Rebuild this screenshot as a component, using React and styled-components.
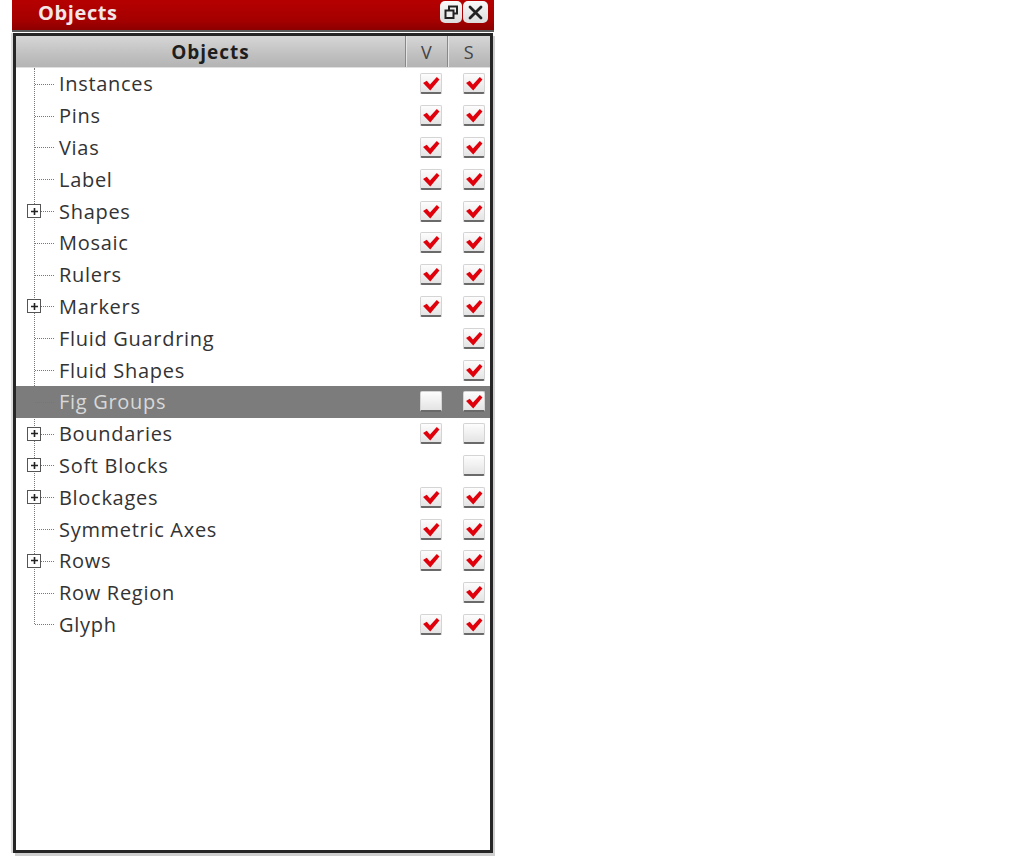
import React from 'react';
import styled, { createGlobalStyle } from 'styled-components';

const Global = createGlobalStyle`
  html, body { margin: 0; background: #fff; }
  body { font-family: "Open Sans", "DejaVu Sans", sans-serif; }
`;

const Page = styled.div`
  width: 1013px;
  height: 858px;
  background: #fff;
  overflow: hidden;
`;

const Window = styled.div`
  margin-left: 12px;
  width: 482px;
  display: flex;
  flex-direction: column;
`;

const TitleBar = styled.div`
  height: 30px;
  background: linear-gradient(#b60000, #a40000 70%, #8c0000);
  display: flex;
  align-items: center;
  padding-left: 26px;
  padding-right: 6px;
  border-bottom: 2px solid #5a5a5a;
`;

const Title = styled.div`
  flex: 1;
  color: #f3e6e6;
  font-weight: 700;
  font-size: 20px;
  letter-spacing: 0.6px;
  margin-top: -6px;
`;

const WinButton = styled.div`
  width: ${p => p.$w}px;
  height: 22px;
  margin-left: 1px;
  margin-top: -6px;
  border-radius: 5px;
  background: linear-gradient(#fafafa, #dcdcdc);
  display: flex;
  align-items: center;
  justify-content: center;
`;

const Frame = styled.div`
  margin-top: 1px;
  margin-left: 1px;
  width: 474px;
  height: 814px;
  border: 3px solid #262626;
  box-shadow: -2px 0 0 #ddd, 2px 3px 0 #cfcfcf;
  background: #fff;
  display: flex;
  flex-direction: column;
`;

const Header = styled.div`
  height: 31px;
  display: grid;
  grid-template-columns: 389px 42px 43px;
  background: linear-gradient(#d6d6d6, #c0c0c0 60%, #b4b4b4);
  border-bottom: 1px solid #e0e0e0;
`;

const HeadCell = styled.div`
  display: flex;
  align-items: center;
  justify-content: center;
  font-size: ${p => (p.$bold ? 19 : 18)}px;
  letter-spacing: ${p => (p.$bold ? 1 : 0.5)}px;
  font-weight: ${p => (p.$bold ? 700 : 400)};
  color: ${p => (p.$bold ? '#1e1e1e' : '#444')};
  border-left: ${p => (p.$divider ? '1px solid #888' : 'none')};
  box-shadow: ${p => (p.$divider ? 'inset 1px 0 0 #e4e4e4' : 'none')};
`;

const Tree = styled.div`
  position: relative;
  display: flex;
  flex-direction: column;
`;

const VLine = styled.div`
  position: absolute;
  left: 18px;
  top: 0;
  height: 556px;
  border-left: 1px dotted #777;
`;

const Row = styled.div`
  position: relative;
  height: 31.8px;
  display: grid;
  grid-template-columns: 389px 42px 43px;
  align-items: center;
  background: ${p => (p.$selected ? '#7c7c7c' : 'transparent')};
`;

const NameCell = styled.div`
  display: flex;
  align-items: center;
  padding-left: 12px;
  font-size: 20px;
  letter-spacing: 0.7px;
  color: ${p => (p.$selected ? '#d8d8d8' : '#333')};
`;

const Branch = styled.div`
  position: relative;
  width: 31px;
  height: 14px;
  flex: none;
  display: flex;
  align-items: center;
`;

const HLine = styled.div`
  position: absolute;
  left: 7px;
  right: 5px;
  top: 7px;
  border-top: 1px dotted #777;
`;

const PlusBox = styled.div`
  position: relative;
  z-index: 1;
  width: 12px;
  height: 12px;
  margin-left: -1px;
  border: 1px solid #555;
  background: #fff;
  display: flex;
  align-items: center;
  justify-content: center;
`;

const CheckCell = styled.div`
  display: flex;
  justify-content: center;
  padding-left: 10px;
`;

const Box = styled.div`
  width: 22px;
  height: 21px;
  border-radius: 2px;
  background: linear-gradient(#fdfdfd, #e4e4e4);
  border: 1px solid #d4d4d4;
  border-bottom: 2px solid #6a6a6a;
  display: flex;
  align-items: flex-end;
  justify-content: center;
  padding-bottom: 1px;
  box-sizing: border-box;
`;

const Check = () => (
  <svg width="18" height="15" viewBox="0 0 17 14">
    <path d="M1 6.5 L4.5 4.5 L7.5 8 L14 0.8 L16.5 3.2 L7.8 13.5 Z" fill="#e0000b" />
  </svg>
);

const CheckBox = ({ checked }) => (
  <CheckCell>
    {checked !== undefined && <Box>{checked && <Check />}</Box>}
  </CheckCell>
);

const items = [
  { name: 'Instances', v: true, s: true },
  { name: 'Pins', v: true, s: true },
  { name: 'Vias', v: true, s: true },
  { name: 'Label', v: true, s: true },
  { name: 'Shapes', v: true, s: true, plus: true },
  { name: 'Mosaic', v: true, s: true },
  { name: 'Rulers', v: true, s: true },
  { name: 'Markers', v: true, s: true, plus: true },
  { name: 'Fluid Guardring', s: true },
  { name: 'Fluid Shapes', s: true },
  { name: 'Fig Groups', v: false, s: true, selected: true },
  { name: 'Boundaries', v: true, s: false, plus: true },
  { name: 'Soft Blocks', s: false, plus: true },
  { name: 'Blockages', v: true, s: true, plus: true },
  { name: 'Symmetric Axes', v: true, s: true },
  { name: 'Rows', v: true, s: true, plus: true },
  { name: 'Row Region', s: true },
  { name: 'Glyph', v: true, s: true },
];

export default function App() {
  return (
    <Page>
      <Global />
      <Window>
        <TitleBar>
          <Title>Objects</Title>
          <WinButton $w={22}>
            <svg width="15" height="15" viewBox="0 0 15 15">
              <rect x="5" y="1.5" width="8" height="7" fill="none" stroke="#222" strokeWidth="2" />
              <rect x="1.5" y="5.5" width="8" height="7.5" fill="#eee" stroke="#222" strokeWidth="2" />
            </svg>
          </WinButton>
          <WinButton $w={25}>
            <svg width="15" height="15" viewBox="0 0 15 15">
              <path d="M2 2 L13 13 M13 2 L2 13" stroke="#222" strokeWidth="2.8" strokeLinecap="round" />
            </svg>
          </WinButton>
        </TitleBar>
        <Frame>
          <Header>
            <HeadCell $bold>Objects</HeadCell>
            <HeadCell $divider>V</HeadCell>
            <HeadCell $divider>S</HeadCell>
          </Header>
          <Tree>
            <VLine />
            {items.map(it => (
              <Row key={it.name} $selected={it.selected}>
                <NameCell $selected={it.selected}>
                  <Branch>
                    <HLine />
                    {it.plus && (
                      <PlusBox>
                        <svg width="9" height="9" viewBox="0 0 9 9">
                          <path d="M1 4.5 H8 M4.5 1 V8" stroke="#222" strokeWidth="1.6" />
                        </svg>
                      </PlusBox>
                    )}
                  </Branch>
                  {it.name}
                </NameCell>
                <CheckBox checked={it.v} />
                <CheckBox checked={it.s} />
              </Row>
            ))}
          </Tree>
        </Frame>
      </Window>
    </Page>
  );
}
